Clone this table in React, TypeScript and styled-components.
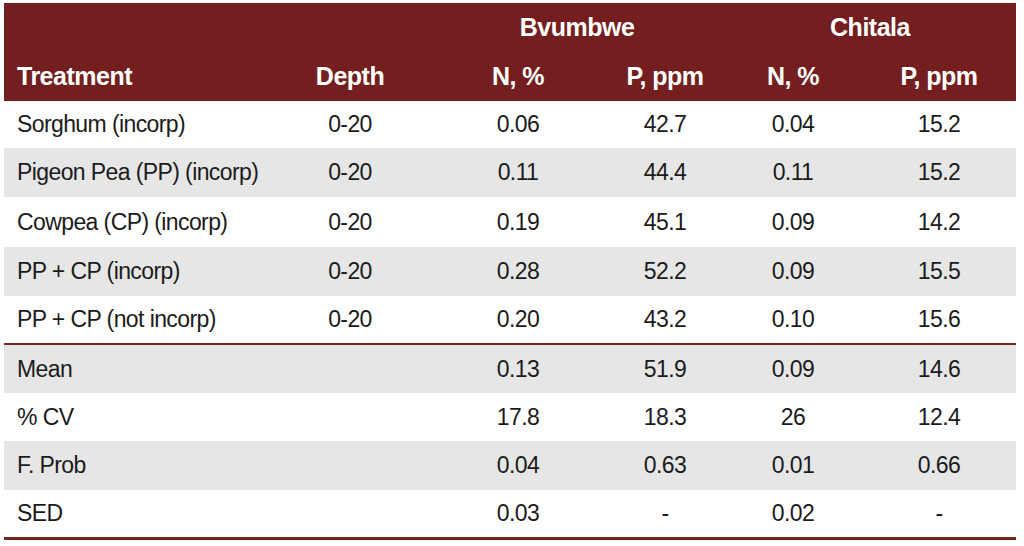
import React from 'react';
import styled, { createGlobalStyle } from 'styled-components';

const GlobalStyle = createGlobalStyle`
  html, body {
    margin: 0;
    padding: 0;
    background: #ffffff;
  }
  body {
    font-family: "Liberation Sans", Arial, sans-serif;
  }
`;

const COLUMNS = '266px 160px 176px 118px 138px 1fr';

const Page = styled.div`
  width: 1024px;
  height: 546px;
  padding: 3px 8px 0 4px;
  box-sizing: border-box;
`;

const Table = styled.div`
  display: flex;
  flex-direction: column;
  border-bottom: 3px solid #7a2222;
`;

const HeaderBand = styled.div`
  background: #741f1f;
  color: #ffffff;
  height: 98px;
  display: grid;
  grid-template-columns: ${COLUMNS};
  grid-template-rows: 48px 50px;
  font-weight: 700;
  font-size: 25px;
  letter-spacing: -0.5px;
`;

const HeadCell = styled.div<{ $align?: 'left' | 'center'; $span?: number; $row: number }>`
  grid-row: ${p => p.$row};
  grid-column: span ${p => p.$span ?? 1};
  display: flex;
  align-items: center;
  justify-content: ${p => (p.$align === 'left' ? 'flex-start' : 'center')};
  padding-left: ${p => (p.$align === 'left' ? '13px' : '0')};
`;

const Row = styled.div<{ $shade?: boolean; $height: number; $divider?: boolean }>`
  display: grid;
  grid-template-columns: ${COLUMNS};
  height: ${p => p.$height}px;
  background: ${p => (p.$shade ? '#e6e6e6' : '#ffffff')};
  border-top: ${p => (p.$divider ? '2px solid #7a2222' : 'none')};
  color: #1b1b1b;
  font-size: 23px;
  letter-spacing: -0.6px;
`;

const Cell = styled.div<{ $left?: boolean }>`
  display: flex;
  align-items: center;
  justify-content: ${p => (p.$left ? 'flex-start' : 'center')};
  padding-left: ${p => (p.$left ? '13px' : '0')};
  white-space: nowrap;
`;

type Line = [string, string, string, string, string, string];

const treatments: Line[] = [
  ['Sorghum (incorp)', '0-20', '0.06', '42.7', '0.04', '15.2'],
  ['Pigeon Pea (PP) (incorp)', '0-20', '0.11', '44.4', '0.11', '15.2'],
  ['Cowpea (CP) (incorp)', '0-20', '0.19', '45.1', '0.09', '14.2'],
  ['PP + CP (incorp)', '0-20', '0.28', '52.2', '0.09', '15.5'],
  ['PP + CP (not incorp)', '0-20', '0.20', '43.2', '0.10', '15.6'],
];

const stats: Line[] = [
  ['Mean', '', '0.13', '51.9', '0.09', '14.6'],
  ['% CV', '', '17.8', '18.3', '26', '12.4'],
  ['F. Prob', '', '0.04', '0.63', '0.01', '0.66'],
  ['SED', '', '0.03', '-', '0.02', '-'],
];

const treatmentHeights = [47, 49, 50, 49, 47];
const statHeights = [46, 48, 49, 47];

const renderLine = (line: Line) =>
  line.map((value, i) => (
    <Cell key={i} $left={i === 0}>
      {value}
    </Cell>
  ));

export default function App() {
  return (
    <Page>
      <GlobalStyle />
      <Table>
        <HeaderBand>
          <HeadCell $row={1} $span={2} />
          <HeadCell $row={1} $span={2}>Bvumbwe</HeadCell>
          <HeadCell $row={1} $span={2}>Chitala</HeadCell>
          <HeadCell $row={2} $align="left">Treatment</HeadCell>
          <HeadCell $row={2}>Depth</HeadCell>
          <HeadCell $row={2}>N, %</HeadCell>
          <HeadCell $row={2}>P, ppm</HeadCell>
          <HeadCell $row={2}>N, %</HeadCell>
          <HeadCell $row={2}>P, ppm</HeadCell>
        </HeaderBand>
        {treatments.map((line, i) => (
          <Row key={line[0]} $shade={i % 2 === 1} $height={treatmentHeights[i]}>
            {renderLine(line)}
          </Row>
        ))}
        {stats.map((line, i) => (
          <Row
            key={line[0]}
            $shade={i % 2 === 0}
            $divider={i === 0}
            $height={statHeights[i] + (i === 0 ? 2 : 0)}
          >
            {renderLine(line)}
          </Row>
        ))}
      </Table>
    </Page>
  );
}
